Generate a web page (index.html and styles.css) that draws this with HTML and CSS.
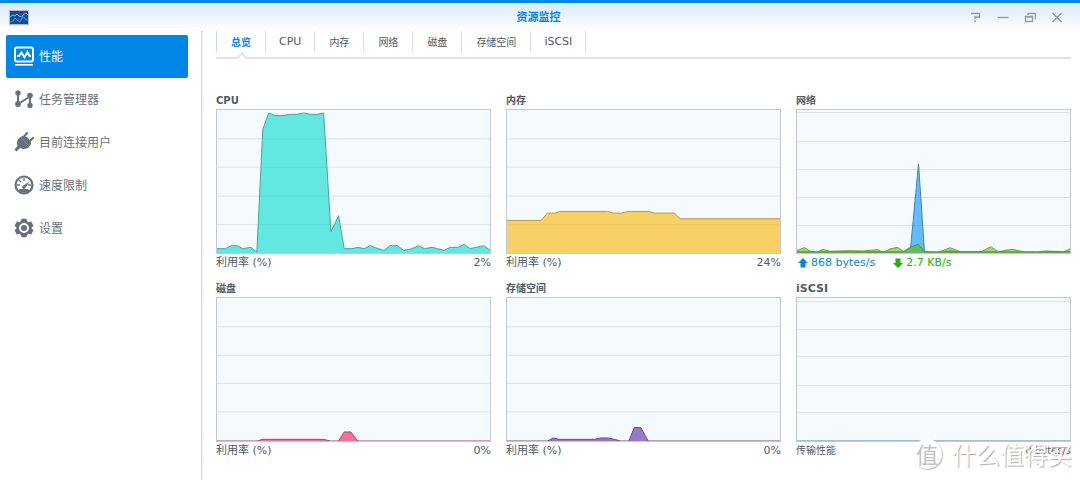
FILE: index.html
```html
<!DOCTYPE html>
<html lang="zh-CN">
<head>
<meta charset="utf-8">
<title>资源监控</title>
<link rel="stylesheet" href="styles.css">
</head>
<body>
<div class="window">
  <header class="titlebar">
    <svg class="app-icon" viewBox="0 0 20 16" aria-hidden="true">
      <rect width="20" height="16" fill="#b9bcbf"/>
      <rect x="1" y="1" width="18" height="13" fill="#124b8d"/>
      <path d="M1 5h18M1 9h18M5 1v13M10 1v13M15 1v13" stroke="#1f66ad" stroke-width=".6"/>
      <path d="M1 7l3-2 2 1 2-2 2 2 3 1 2-3 2-1 2 2" fill="none" stroke="#69b4ee"/>
      <path d="M1 12l3-1 2-3 2 2 3 2 2-4 2-1 2 3 2 0" fill="none" stroke="#3d96e2"/>
      <path d="M0 15.5h20" stroke="#e8e8e8"/>
    </svg>
    <h1 class="window-title">资源监控</h1>
    <div class="window-tools">
      <button class="tool" aria-label="帮助"><svg viewBox="0 0 12 12"><path d="M1 1.500h8.500v3.500h-4.500v2M5 8v2"/></svg></button>
      <button class="tool" aria-label="最小化"><svg viewBox="0 0 12 12"><path d="M.5 5.500h11"/></svg></button>
      <button class="tool" aria-label="还原"><svg viewBox="0 0 12 12"><path d="M1.500 4.500h7v5h-7zM1 5h8M4 1.500h7.500v6M4 1.500v1.500"/></svg></button>
      <button class="tool" aria-label="关闭"><svg viewBox="0 0 12 12"><path d="M1.500 1l9 9M10.500 1l-9 9"/></svg></button>
    </div>
  </header>

  <div class="body">
    <nav class="sidebar">
      <a class="nav-item active" href="#performance">
        <svg class="nav-icon" viewBox="0 0 20 20"><rect x="1" y="1.500" width="18" height="14" rx="2" fill="none" stroke="currentColor" stroke-width="2"/><path d="M3 10h2l2.500-3.500 3 5L13.500 6l2 4H17" fill="none" stroke="currentColor" stroke-width="1.800"/><path d="M1 18.800h18" stroke="currentColor" stroke-width="1.600"/></svg>
        <span>性能</span></a>
      <a class="nav-item" href="#tasks">
        <svg class="nav-icon" viewBox="0 0 20 20"><path d="M4 4v11l12-7.500V16" fill="none" stroke="currentColor" stroke-width="2"/><g fill="currentColor"><circle cx="4" cy="4" r="2.700"/><circle cx="4" cy="15" r="2.900"/><circle cx="16" cy="6.500" r="2.800"/><circle cx="16" cy="16.500" r="2.700"/></g></svg>
        <span>任务管理器</span></a>
      <a class="nav-item" href="#users">
        <svg class="nav-icon" viewBox="0 0 20 20"><path d="M6.500 5L15.500 14.500C12.500 17.500 9 17.500 6 16L2.500 19.500 .5 17.500l3-3.500C2 10.500 3.500 7 6.500 5z" fill="currentColor"/><path d="M6.500 5l9 9.500c2.300-2.500 1.800-5-.5-7.500S9.500 3 6.500 5z" fill="currentColor"/><path d="M9.500 5l3.500-4M15.500 9.500l3.700-3.700" stroke="currentColor" stroke-width="2" stroke-linecap="round"/></svg>
        <span>目前连接用户</span></a>
      <a class="nav-item" href="#speed">
        <svg class="nav-icon" viewBox="0 0 20 20"><circle cx="10" cy="10" r="8.500" fill="none" stroke="currentColor" stroke-width="2.200"/><path d="M4 15.500a9 9 0 0 0 12 0l-2-1.500H6z" fill="currentColor"/><path d="M10 3v3M3 10h3M14 10h3M5 5l2 2" stroke="currentColor" stroke-width="1.400"/><path d="M8.300 11.300L15.500 6.500l-4.500 7a1.800 1.800 0 0 1-2.700-2.200z" fill="currentColor"/></svg>
        <span>速度限制</span></a>
      <a class="nav-item" href="#settings">
        <svg class="nav-icon" viewBox="0 0 20 20"><path d="M7.500 .8h5l.7 2.500 1.500.9 2.500-.7 2.300 4.200-1.900 1.900v.8l1.900 1.900-2.300 4.200-2.500-.7-1.500.9-.7 2.500h-5l-.7-2.500-1.500-.9-2.500.7L.5 12.300l1.900-1.900v-.8L.5 7.700l2.300-4.200 2.500.7 1.500-.9z" fill="currentColor"/><circle cx="10" cy="10" r="4" fill="none" stroke="#fff" stroke-width="2"/></svg>
        <span>设置</span></a>
    </nav>

    <main class="content">
      <div class="tabs" role="tablist">
        <button class="tab selected" role="tab" aria-selected="true">总览</button>
        <button class="tab latin" role="tab">CPU</button>
        <button class="tab" role="tab">内存</button>
        <button class="tab" role="tab">网络</button>
        <button class="tab" role="tab">磁盘</button>
        <button class="tab" role="tab">存储空间</button>
        <button class="tab latin" role="tab">iSCSI</button>
      </div>

      <div class="charts">
        <section class="card">
          <h2 class="card-title">CPU</h2>
          <svg class="chart" viewBox="34 58 822 430" preserveAspectRatio="none">
            <path class="grid" d="M34 145H856M34 230H856M34 317H856M34 403H856"/>
            <path class="area cpu" d="M30 475H60L76 466H95L111 475L136 471L154 485L172 115L190 67L211 75H233L252 71H275L295 67L314 71H338L355 67L377 424L400 376L417 475H440L459 471L477 475L495 466L516 474L537 480L555 466H577L596 480L618 476L641 466L659 475L682 471L718 480L736 471H760L778 462L796 475L837 466L860 482V494H30z"/>
          </svg>
          <div class="card-foot"><span>利用率 (%)</span><span>2%</span></div>
        </section>
        <section class="card">
          <h2 class="card-title">内存</h2>
          <svg class="chart" viewBox="34 58 822 430" preserveAspectRatio="none">
            <path class="grid" d="M34 145H856M34 230H856M34 317H856M34 403H856"/>
            <path class="area memory" d="M30 390H137L156 368H178L192 363H336L352 368H380L398 363H460L477 368H538L555 385H860V494H30z"/>
          </svg>
          <div class="card-foot"><span>利用率 (%)</span><span>24%</span></div>
        </section>
        <section class="card">
          <h2 class="card-title">网络</h2>
          <svg class="chart" viewBox="36 58 820 430" preserveAspectRatio="none">
            <path class="grid" d="M34 67H858M34 152H858M34 238H858M34 320H858M34 404H858"/>
            <path class="area received" d="M32 482L59 472L77 483L95 486L114 477L135 483L195 481L235 482L277 478L296 486L315 476L338 471L355 483L378 470L401 462L419 484L460 486L496 472L525 484L590 484L618 469L642 485L660 480L684 477L720 485H760L780 482L838 484L860 474V494H32z"/>
            <path class="area sent" d="M32 485H376L401 220L419 485L470 486L496 482L525 485H618L760 486L800 484L860 485V494H32z"/>
            <path class="area overlap" d="M32 485H360L378 470L401 462L419 485H860V494H32z"/>
          </svg>
          <div class="card-foot rates">
            <span class="rate up"><svg class="arrow" viewBox="0 0 10 10"><path d="M5 0l5 5H7.500v4.500h-5V5H0z"/></svg>868 bytes/s</span>
            <span class="rate down"><svg class="arrow" viewBox="0 0 10 10"><path d="M5 10l5-5H7.500V.5h-5V5H0z"/></svg>2.7 KB/s</span>
          </div>
        </section>
        <section class="card">
          <h2 class="card-title">磁盘</h2>
          <svg class="chart" viewBox="34 70 822 427" preserveAspectRatio="none">
            <path class="grid" d="M34 156H856M34 241H856M34 325H856M34 410H856"/>
            <path class="area disk" d="M30 497H156L170 492H354L376 497H400L417 470H437L458 497H860V502H30z"/>
          </svg>
          <div class="card-foot"><span>利用率 (%)</span><span>0%</span></div>
        </section>
        <section class="card">
          <h2 class="card-title">存储空间</h2>
          <svg class="chart" viewBox="34 70 822 427" preserveAspectRatio="none">
            <path class="grid" d="M34 156H856M34 241H856M34 325H856M34 410H856"/>
            <path class="area volume" d="M30 497H156L173 488L190 492H298L315 488H340L376 497H401L417 457H437L459 497H860V502H30z"/>
          </svg>
          <div class="card-foot"><span>利用率 (%)</span><span>0%</span></div>
        </section>
        <section class="card">
          <h2 class="card-title latin">iSCSI</h2>
          <svg class="chart" viewBox="36 70 820 427" preserveAspectRatio="none">
            <path class="grid" d="M34 79H858M34 163H858M34 246H858M34 331H858M34 413H858"/>
            <path class="area iscsi" d="M32 496H860V502H32z"/>
          </svg>
          <div class="card-foot"><span class="cjk">传输性能</span><span class="cjk">0 bytes/s</span></div>
        </section>
      </div>
    </main>
  </div>
  <div class="watermark"><span class="seal">值</span><span class="mark-text">什么值得买</span></div>
</div>
</body>
</html>
```
FILE: styles.css
```css
* {
  box-sizing: border-box;
}

body {
  margin: 0;
  background: #fff;
  color: #505a64;
  font-family: "DejaVu Sans", "Noto Sans CJK SC", sans-serif;
  font-size: 11px;
}

button {
  border: 0;
  background: none;
  padding: 0;
  color: inherit;
  font: inherit;
}

.window {
  position: relative;
  display: flex;
  flex-direction: column;
  min-height: 100vh;
}

.titlebar {
  display: grid;
  grid-template-columns: 1fr auto 1fr;
  align-items: center;
  height: 31px;
  padding: 1px 12px 0 9px;
  border-top: 3px solid #0086e5;
  box-shadow: inset 0 1px #f3f9fe;
  background: linear-gradient(#d9ebfa, #fff);
}

.app-icon {
  width: 20px;
  height: 16px;
}

.window-title {
  margin: 0;
  color: #0086e5;
  font-size: 11px;
  line-height: 16px;
}

.window-tools {
  display: flex;
  justify-content: flex-end;
  gap: 15px;
  padding-right: 5px;
}

.tool {
  width: 12px;
  height: 12px;
}

.tool svg {
  display: block;
  width: 12px;
  height: 12px;
  fill: none;
  stroke: #929ca6;
  stroke-width: 1.4;
}

.body {
  display: flex;
  flex: 1;
}

.sidebar {
  flex: none;
  width: 202px;
  padding: 4px 13px 0 6px;
  border-right: 1px solid #d6d9dc;
  box-shadow: 1px 0 2px #eceef0;
}

.nav-item {
  display: flex;
  align-items: center;
  gap: 5px;
  height: 43px;
  padding: 0 8px 2px;
  border-radius: 2px;
  color: #66717c;
  font-size: 12px;
  text-decoration: none;
}

.nav-item.active {
  background: #0086e5;
  color: #fff;
}

.nav-icon {
  width: 20px;
  height: 20px;
}

.content {
  flex: 1;
  min-width: 0;
  padding: 0 9px 0 14px;
}

.tabs {
  display: flex;
  height: 28px;
  border-bottom: 2px solid #dfe2e4;
}

.tab {
  position: relative;
  height: 21px;
  padding: 0 14px;
  border-right: 1px solid #d5e0ea;
  font-size: 10px;
}

.tab:first-child {
  border-left: 1px solid #c5dcef;
}

.tab.selected {
  color: #0086e5;
  font-weight: bold;
}

.tab.selected::after {
  content: "";
  position: absolute;
  left: calc(50% - 4px);
  top: 23px;
  width: 8px;
  height: 8px;
  border: solid #dfe2e4;
  border-width: 2px 0 0 2px;
  background: #fff;
  transform: rotate(45deg);
  clip-path: polygon(0 0, 100% 0, 0 100%);
}

.tab.latin,
.card-title.latin {
  font-size: 11px;
}

.tab.latin {
  padding: 0 13px;
}

.charts {
  display: grid;
  grid-template-columns: repeat(3, 1fr);
  gap: 9px 15px;
  padding-top: 33px;
}

.card-title {
  margin: 0;
  font-size: 10px;
  line-height: 17px;
}

.chart {
  display: block;
  width: 100%;
  height: 145px;
  border: 1px solid #c1c9d3;
  background: #f5faff;
}

.grid,
.area {
  vector-effect: non-scaling-stroke;
}

.grid {
  fill: none;
  stroke: #dfe2e4;
  shape-rendering: crispEdges;
}

.cpu { fill: rgba(0, 220, 205, .6); stroke: #4e9fa1; }
.memory { fill: rgba(248, 186, 20, .65); stroke: #b59b4c; }
.received { fill: #a0d96b; stroke: #709c48; }
.sent { fill: rgba(20, 155, 255, .65); stroke: #4b7fa8; }
.overlap { fill: #62bb62; stroke: #5c9741; }
.disk { fill: #f5719a; stroke: #a04868; }
.volume { fill: #9679cd; stroke: #654c90; }
.iscsi { fill: none; stroke: #99b1ce; }

.card-foot {
  display: flex;
  justify-content: space-between;
  padding-top: 1px;
  line-height: 16px;
}

.cjk {
  font-size: 10px;
}

.card-foot.rates {
  justify-content: flex-start;
  gap: 18px;
  padding-left: 2px;
}

.rate {
  display: flex;
  align-items: center;
  gap: 3px;
}

.up { color: #0086e5; }
.down { color: #1eb300; }

.arrow {
  width: 10px;
  height: 10px;
  fill: currentColor;
}

.watermark {
  position: absolute;
  right: 8px;
  bottom: 8px;
  display: flex;
  align-items: center;
  gap: 10px;
  color: #fff;
  font-family: "Noto Sans CJK SC", sans-serif;
  font-size: 24px;
  line-height: 36px;
  text-shadow: 1px 1px 1px #aaa;
}

.seal {
  width: 30px;
  height: 30px;
  border-radius: 50%;
  background: #fff;
  box-shadow: 1px 1px 1px #bbb;
  color: #c4c4c4;
  font-size: 22px;
  line-height: 29px;
  text-align: center;
  text-shadow: none;
}
```
